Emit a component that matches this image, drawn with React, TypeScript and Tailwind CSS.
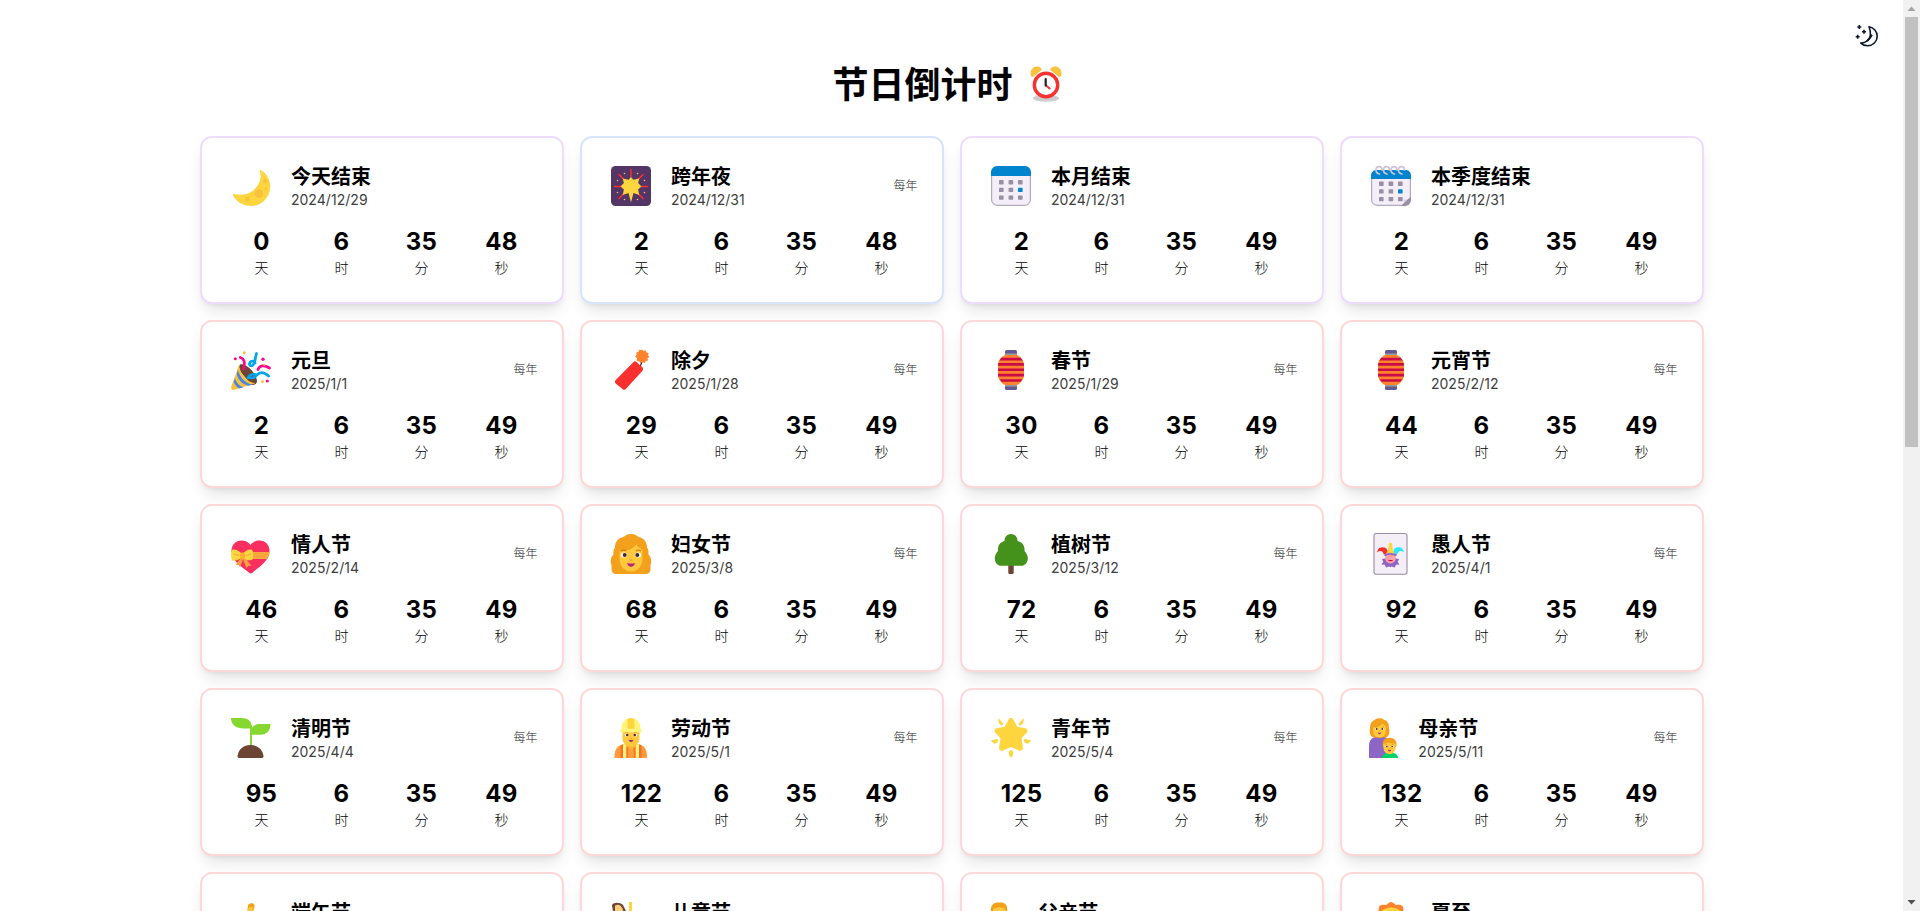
import type { ReactNode } from 'react';
import clsx from 'clsx';

type Tone = 'purple' | 'blue' | 'red';

interface Festival {
  name: string;
  date: string;
  days: number;
  seconds: number;
  tone: Tone;
  yearly: boolean;
  icon: ReactNode;
  narrow?: boolean;
}

const toneBorder: Record<Tone, string> = {
  purple: 'border-[#eedcfd]',
  blue: 'border-[#d6e4fd]',
  red: 'border-[#fdd8d8]',
};

const Moon = () => (
  <>
    <path fill="#fcd53f" d="M30.3 4.2C36 8 39.2 14 39.2 20.5 39.2 31.5 30.5 40 20 40 12 40 5.300 35.800 2 29.300 1.600 28.300 2.300 27.600 3.300 27.900 18 32 33 19.500 28.900 5.200 28.600 4.200 29.500 3.700 30.300 4.200Z" />
    <g fill="#f9c23c">
      <circle cx="28" cy="27.700" r="4.200" />
      <circle cx="16.300" cy="33" r="2.300" />
      <circle cx="34.300" cy="15" r="2.100" />
      <circle cx="35" cy="22.700" r="1.400" />
    </g>
  </>
);

const Fireworks = () => (
  <>
    <rect width="40" height="40" rx="4.500" fill="#533566" />
    <g stroke="#f8312f" strokeWidth="1.500" strokeLinecap="round">
      <path d="M20 3.500v7M3.500 20.500h6M30.500 20.500h6M8 8.500l5 5M32 8.500l-5 5M8 32.500l5-5M32 32.500l-5-5" />
    </g>
    <g fill="#f3c07b">
      <circle cx="13.500" cy="7.500" r="0.800" /><circle cx="26.500" cy="7.500" r="0.800" />
      <circle cx="6.500" cy="14.500" r="0.800" /><circle cx="33.500" cy="14.500" r="0.800" />
      <circle cx="6.500" cy="26.500" r="0.800" /><circle cx="33.500" cy="26.500" r="0.800" />
      <circle cx="13.500" cy="33.500" r="0.800" /><circle cx="26.500" cy="33.500" r="0.800" />
    </g>
    <path fill="#fcd53f" d="M20 11l2.300 2.700 6-1.300-1.200 4.700 3.400 3.500-3.400 3 1.200 5.300-5.800-1.800L20 36.500l-2.500-9.400-5.800 1.800 1.200-5.300-3.400-3 3.400-3.500-1.200-4.700 6 1.300Z" />
  </>
);

const CalendarGrid = ({ y }: { y: number }) => (
  <g>
    {[0, 1, 2].map((r) =>
      [8, 17.600, 27].map((x, c) => (
        <rect key={`${r}-${c}`} x={x} y={y + r * 7.700} width="4.600" height="4.400" rx="0.700" fill={r === 1 && c === 2 ? '#0084ce' : '#998ea4'} />
      )),
    )}
  </g>
);

const Calendar = () => (
  <>
    <rect x="0.600" y="0.600" width="38.800" height="38.800" rx="6" fill="#f3eef8" stroke="#b4acbc" strokeWidth="1.200" />
    <path fill="#0084ce" d="M0 10V6.500C0 2.900 2.900 0 6.500 0h27C37.100 0 40 2.900 40 6.500V10Z" />
    <CalendarGrid y={14} />
  </>
);

const SpiralCalendar = () => (
  <>
    <path d="M0.600 12h38.800v20l-8 7.400H6.600a6 6 0 0 1-6-6Z" fill="#f3eef8" stroke="#b4acbc" strokeWidth="1.200" />
    <path fill="#0084ce" d="M0 13V9.500C0 6 2.500 4 6 4h28c3.500 0 6 2 6 5.500V13Z" />
    <CalendarGrid y={15.500} />
    <path d="M40 30.500L30 40c3-1 3-2.500 2.500-6.500 3.500.5 6-.5 7.500-3Z" fill="#d8cfe0" />
    <path d="M40 30.500V34a6 6 0 0 1-6 6h-4Z" fill="#998ea4" />
    <g fill="none" stroke="#cdc4d6" strokeWidth="1.700" strokeLinecap="round">
      {[5, 12.500, 20, 27.500].map((x) => (
        <path key={x} d={`M${x + 3.500} 8c-2.500-.5-3.500-2-3.500-4C${x}-.5 ${x + 6}-.5 ${x + 6} 4`} />
      ))}
    </g>
  </>
);

const Party = () => (
  <>
    <path fill="#6d4534" d="M9 14.500c6-2 16.500 9 17 16.500 0 3-3 4-5.500 4L7 19Z" />
    <path fill="#f9c23c" d="M8.300 14.200C8 22 15 32 24.500 33.300L3.500 39.800C1.200 40.300-.3 38.800.2 36.700Z" />
    <g fill="#4686ec">
      <path d="M7 19.500c1 7 8 14.500 14.500 15l-4 1.200C11 34.500 6 28.500 5.900 23.500Z" />
      <path d="M4 28c1.200 4.500 4.500 8.300 8.500 9.200l-4 1.200C5.500 37 3.500 34.500 2.800 31.500Z" />
    </g>
    <g fill="none" strokeWidth="2.700" strokeLinecap="round">
      <path stroke="#f70a8d" d="M9.300 7.500c3.700 1 5.200 4.500 3.200 11.500M27 19.500c1.500-4 6-5 11.500-1.500" />
      <path stroke="#00a6ed" d="M25.500 3.500c-1.500 4-1 9-3.500 11.500-2 2-4.500 0-3-2.500 1.500-2.300 4.500-1.500 5 .5M17 28c3-5 6-3.500 9-3.200 3.500-3.500 7-2.800 11.500 1.200M26 24.800c-2 3-4.500 3.500-6.500 3" />
    </g>
    <g fill="#f70a8d"><circle cx="4.300" cy="8.700" r="1.500" /><circle cx="32" cy="9.300" r="1.700" /><circle cx="36.300" cy="31" r="1.600" /></g>
    <g fill="#f9c23c"><circle cx="13.300" cy="2.800" r="1.500" /><circle cx="31.500" cy="31.500" r="1.500" /><circle cx="33.500" cy="15" r="1" /></g>
  </>
);

const Firecracker = () => (
  <>
    <path d="M28.500 16.500c2.500-2 2.700-5 2.800-9" fill="none" stroke="#321b41" strokeWidth="1.300" />
    <path fill="#f8312f" d="M22.300 12.300c1.200-1.300 2.200-1.200 3.500-.1l5.300 4.900c1.300 1.200 1.400 2.500.2 3.800L14.800 39c-1.200 1.200-2.200 1.100-3.300 0L4.700 33.500c-1.100-1-1.100-2.200 0-3.400Z" />
    <path fill="#ff822d" d="M31.300 0l1.700 1.700 2.300-.7.600 2.300 2.300.6-.7 2.300L39 7.500l-2 1.600.6 2.300-2.400.5-1 2-2.400-.9-2 1-1.200-2-2.400-.5.400-2.400-2-1.700 1.600-1.700-.6-2.300 2.400-.6.700-2.300 2.400.5Z" transform="translate(-.5 -.8)" />
  </>
);

const Lantern = () => (
  <>
    <rect x="14" y="0" width="12" height="40" rx="1.600" fill="#635994" />
    <path fill="#9b9b9b" d="M14 3.500h12V5H14zM14 35h12v1.500H14z" />
    <path fill="#ff822d" d="M14 5h12c4 2 7 6 7 10v10c0 4-3 8-7 10H14c-4-2-7-6-7-10V15c0-4 3-8 7-10Z" />
    <g fill="#ca0b4a">
      <path d="M10.300 7.800h19.400l1.900 2.600H8.400zM7.300 13.100h25.400l.3 2.600H7zM7 18.500h26v2.600H7zM7 23.800h26l-.2 2.600H7.200zM8.800 29.200h22.400l-1.800 2.600H10.600z" />
    </g>
  </>
);

const GiftHeart = () => (
  <>
    <path fill="#f92f60" d="M19.500 11C22 7.500 25 6.500 28.500 6.500 34.500 6.500 38.500 11 38.500 17 38.500 27 28 33 21.300 38.700c-1 .9-2.200.9-3.200 0C11 33 .5 27 .5 17 .5 11 4.500 6.500 10.500 6.500 14 6.500 17 7.500 19.500 11Z" />
    <path fill="#f9aa3c" d="M15 18h23.500c-.1 2.700-.9 5-2.200 7H15Z" />
    <path d="M15 20.300h23M15 22.800h22" stroke="#ff9b3d" strokeWidth=".7" />
    <path fill="#f9a13c" d="M10.500 23L4.500 31l3-.3 1.500 2.500 3-8 3.500 9 1.700-2.500 3.300.3-7-9Z" />
    <path fill="#fcd53f" d="M11.500 20.500C8 16 4.500 15 1.500 15.500-.3 17-.3 25 1.500 26.800 5 27 8.500 26 11.500 22.500 14 26 17.500 27 21 26c1.700-2 1.700-8 0-10.300-3.500-.5-7 .8-9.500 4.800Z" />
    <path d="M3 20l5 1.500M20 20l-5 1.500" stroke="#f9a13c" strokeWidth="1" />
    <rect x="9" y="18.500" width="5" height="6" rx="1.500" fill="#ffb02e" />
  </>
);

const Face = ({ x, y, s = 1 }: { x: number; y: number; s?: number }) => (
  <g transform={`translate(${x} ${y}) scale(${s})`}>
    <ellipse cx="-7" cy="0" rx="3" ry="2.500" fill="#fff" />
    <ellipse cx="7" cy="0" rx="3" ry="2.500" fill="#fff" />
    <circle cx="-6.300" cy="0" r="2" fill="#402a32" />
    <circle cx="6.300" cy="0" r="2" fill="#402a32" />
    <path d="M-10-4q3-2 5 0M10-4q-3-2-5 0" fill="none" stroke="#c87b13" strokeWidth="1.200" />
    <path d="M-1.500 5h3" stroke="#f59f24" strokeWidth="1.400" />
    <path d="M-4 8q4 1 8 0-1 3.700-4 3.700T-4 8Z" fill="#bb1d80" />
  </g>
);

const Woman = () => (
  <>
    <path fill="#f3a01c" d="M20 0c4 0 6 1.500 7.500 3C33 4 36 8 36 13.500 38 16 37.500 19 37.500 20.500 41 24 40.500 28.500 39.500 31v4.500c0 2.500-2 4.500-4.500 4.500H5C2.500 40 .5 38 .5 35.500V31C-.5 28.500-1 24 2.500 20.500 2.500 19 2 16 4 13.500 4 8 7 4 12.500 3 14 1.500 16 0 20 0Z" />
    <path fill="#ffc83d" d="M25.500 10c1 3.500 4.500 4.500 6 6V24c0 8-4.500 13.500-11.500 13.500S8.500 32 8.500 24v-6.500C15.500 17 22.500 15 25.500 10Z" />
    <Face x={20} y={21} />
  </>
);

const Tree = () => (
  <>
    <path fill="#6d4534" d="M17.300 29h5.400v9.500c0 1-.6 1.500-1.500 1.500h-2.400c-.9 0-1.500-.5-1.500-1.500Z" />
    <path fill="#44911b" d="M20 0c4 0 6.500 3 6.500 7 5 1 7.500 5 7 10 2.500 3 3.700 5.500 3.200 8.500-.6 4-3.200 6.300-7 6.300H10.700c-3.800 0-6.200-2.300-6.800-6.300-.5-3 .7-5.500 3.100-8.500-.5-5 2-9 6.500-10 0-4 2.500-7 6.500-7Z" />
  </>
);

const Joker = () => (
  <>
    <rect x="3" y="-.5" width="33" height="40.800" rx="2.200" fill="#f3eef8" stroke="#998ea4" strokeWidth="1.100" />
    <path fill="#8d65c5" d="M11 25l3-.5h11l3 .5-1.300 3 1.800 2.500-3.500.3-1.200 2.700-3.300-1-1 .8-1.300-.8-3.200 1-1.200-2.700-3.500-.3 2-2.500Z" />
    <path fill="#f8312f" d="M6.300 18.500C6 14 11 11.500 15.500 14.500L18 20.500h-5.300C12 17 9.500 15.800 6.300 18.500Z" />
    <path fill="#26eafc" d="M32.700 18.500c.3-4.500-4.700-7-9.200-4L21 20.500h5.300c.7-3.500 3.200-4.700 6.400-2Z" />
    <path fill="#fcd53f" d="M14.500 20.500c2.500-3 3.300-6.500 3.300-10.500 0-1.700 3.400-1.700 3.400 0 0 4 .8 7.500 3.300 10.500Z" />
    <circle cx="19.500" cy="24" r="5.400" fill="#ff9fa5" />
    <path d="M13.500 21.500c3-2.300 9-2.300 12 0" fill="none" stroke="#8d65c5" strokeWidth="1.700" />
    <path d="M16.800 26h5.400q-2.700 2.500-5.400 0Z" fill="#ca0b4a" />
  </>
);

const Seedling = () => (
  <>
    <path fill="#86d72f" d="M0 0h11c6.500 0 10 4 10 9.500 3-3 5-3.500 8-3.500h10.500c0 6.500-3.500 10.700-10 10.700H21V28h-2V10.500h-6C5 10.500 0 6.500 0 0Z" />
    <path fill="#6d4534" d="M6.500 38.500C7 31.500 12.500 27 19.500 27S32 31.500 32.500 38.500c0 1-.6 1.400-1.500 1.400H8c-.9 0-1.500-.4-1.500-1.400Z" />
  </>
);

const Worker = () => (
  <>
    <path fill="#ff9b3d" d="M3.500 38c0-6.500 3.500-11.500 10-12h13c6.500.5 9.500 5.500 9.500 12v2H3.500Z" />
    <path fill="#fff478" d="M12 26.300h3.500V40H12zM24.500 26.300H28V40h-3.500z" />
    <path fill="#f96e2a" d="M9.500 27.500l2.500-1V40H9.500zM28 26.500l2.500 1V40H28zM15.500 29h9v11h-9z" />
    <path fill="#ff9b3d" d="M17 31h6v9h-6z" />
    <path fill="#ffb02e" d="M15 24h10v4l-5 5-5-5Z" />
    <path fill="#ffc83d" d="M11.500 12h17v8c0 5-3.500 8.500-8.500 8.500S11.500 25 11.500 20Z" />
    <Face x={20} y={17} s={0.600} />
    <path fill="#fff478" d="M10.500 11C10.500 4.500 14 0 20 0s9.500 4.500 9.500 11c1.700.3 1.700 3.300 0 3.300h-19c-1.700 0-1.700-3 0-3.300Z" />
    <path fill="#fcd53f" d="M16.500 2c0-2.500 7-2.500 7 0v8.800h-7Z" />
  </>
);

const GlowStar = () => (
  <>
    <path fill="#fcd53f" d="M17.700 1.500c.9-1.900 3.700-1.900 4.600 0l3.400 6.300c.4.800 1 1.200 1.800 1.300l6.800 1.100c2.200.3 3 2.800 1.500 4.400l-4.600 5c-.5.600-.7 1.200-.6 2l1.300 8c.4 2.300-2 3.900-4 2.900l-6.700-3c-.8-.4-1.600-.4-2.400 0l-6.700 3c-2 1-4.400-.6-4-2.900l1.300-8c.1-.8-.1-1.400-.6-2l-4.600-5c-1.500-1.600-.7-4.100 1.500-4.400l6.800-1.100c.8-.1 1.400-.5 1.800-1.300Z" />
    <g fill="#fcd53f">
      <path d="M7.500.2l4.800 5.500c.2 1.200-1 2-2 1.600C8 6.500 7 4 7.500.2ZM32.500.2l-4.800 5.500c-.2 1.200 1 2 2 1.600C32 6.500 33 4 32.500.2ZM0 22.500l5.800-1.500c1.400.2 1.700 1.700.9 2.500C5 26.500 2.500 26.500 0 22.500ZM40 22.500l-5.800-1.500c-1.400.2-1.700 1.700-.9 2.500C35 26.500 37.500 26.500 40 22.500ZM20 40c-2-2.500-2.700-4.500-2-6.500.6-1.700 3.400-1.700 4 0 .7 2 0 4-2 6.500Z" />
    </g>
  </>
);

const MotherAndSon = () => (
  <>
    <path fill="#8d65c5" d="M0 40V28c0-6 3.500-9.500 9-9.500h4.500c4 0 6.500 3 6.500 8V40Z" />
    <path fill="#f3a01c" d="M10.500.3c2 0 3.500.6 4.500 1.500 4 1 5 4.500 5 8.200 1 3 .5 9-3.500 9.500H5C.5 19 .3 13 1 10 1 6 2.500 3 6 1.800 7 .8 8.500.3 10.500.3Z" />
    <path fill="#ffc83d" d="M13.500 5.500c1 1.500 3 2 3.300 3V13c0 4-2.500 6.500-6.300 6.500S4.300 17 4.300 13V9c4 0 8-1 9.200-3.500Z" />
    <Face x={10.500} y={11} s={0.450} />
    <path fill="#00d26a" d="M13 40c0-3 2.500-5 6-5h4c3.500 0 6 2 6 5Z" />
    <path fill="#f3a01c" d="M14 29c-.7-4 0-8 3.500-8.500 3-1.200 7-.8 8.500 1.500 2 1.500 1.800 5 1 7.500Z" />
    <path fill="#ffc83d" d="M14.500 26c2-.3 3-.7 4.500-1.700 2 1.200 5 1.200 7.500 1.200v4c0 4-2.500 6.500-6 6.500s-6-2.500-6-6.500Z" />
    <Face x={20.500} y={28.500} s={0.420} />
  </>
);

const Rower = () => (
  <>
    <path fill="#f3a01c" d="M17 3.500C17.500 1.500 20 .8 22 1.500c2 .7 2 3.500.8 5.500l-2 7h-5Z" />
    <path fill="#ffc83d" d="M18 5h4l-2 9h-5Z" />
    <path fill="#8d65c5" d="M12 14h12l5 12H10Z" />
    <path fill="#00a6ed" d="M0 27h40c-2 7-8 11-20 11S2 34 0 27Z" />
  </>
);

const CarouselHorse = () => (
  <>
    <path fill="#fcd53f" d="M18 0h3v40h-3z" />
    <path fill="#6d4534" d="M1 3C3-.2 9 0 12 3l4 8v5H3Z" />
    <path fill="#ffce7c" d="M4 3.500c3-1.700 6-.7 7.500 3L14 16h18c3 6 2 12-1 16H10L4 12Z" />
  </>
);

const FatherAndSon = () => (
  <>
    <path fill="#f3a01c" d="M2 10C1 4 4 .5 9 .5h3c4.500 0 7 3.500 6 9.500Z" />
    <path fill="#ffc83d" d="M4 6.500c3 .5 4-1.500 6-1.500s3 2 6 1.500V12c0 9-12 9-12 0Z" />
    <path fill="#00a6ed" d="M0 40V28c0-6 3.500-9.500 9-9.500h4.500c4 0 6.500 3 6.500 8V40Z" />
  </>
);

const SunFace = () => (
  <>
    <path fill="#ff822d" d="M20 0c2.500 0 3.500 2.500 5 3 2-.5 5-.8 6.500 1.300 1.500 2 .5 4 1 5.200 1.500 1.500 4 1.500 5 4.200.7 2.300-1.500 4-1.500 6.300s2.200 4 1.500 6.300c-1 2.700-3.500 2.700-5 4.200-.5 1.200.5 3.200-1 5.200-1.500 2-4.500 1.300-6.500 1.300-1.500.5-2.500 3-5 3s-3.500-2.500-5-3c-2 0-5 .7-6.500-1.300-1.500-2-.5-4-1-5.200C6 29 3.500 29 2.500 26.300 1.800 24 4 22.300 4 20s-2.200-4-1.500-6.300c1-2.700 3.500-2.700 5-4.200.5-1.200-.5-3.200 1-5.200C10 2.200 13 2.500 15 3c1.500-.5 2.500-3 5-3Z" />
    <circle cx="20" cy="20" r="14.500" fill="#fcd53f" />
  </>
);

const AlarmClock = () => (
  <svg className="ml-[8.700px] mr-[8.700px] h-9 w-8" viewBox="0 0 32 36" aria-hidden="true">
    <ellipse cx="16" cy="32.300" rx="13" ry="3.500" fill="#cdcdcd" />
    <g fill="#f9c23c">
      <path d="M1 10C-.5 6 1.500 2 5 .8c3-1 6 .2 7 3L3.500 10.500C2.500 11.300 1.500 11 1 10ZM31 10c1.500-4-.5-8-4-9.200-3-1-6 .2-7 3l8.500 6.700c1 .8 2 .5 2.500-.5Z" />
    </g>
    <circle cx="16" cy="19" r="11.700" fill="#fff" stroke="#f8312f" strokeWidth="3.400" />
    <path d="M16 19.500l3.700 3" stroke="#f8312f" strokeWidth="2" strokeLinecap="round" />
    <path d="M15.700 13v6.500" stroke="#212121" strokeWidth="2.200" strokeLinecap="round" />
  </svg>
);

const NightIcon = () => (
  <svg className="size-6" viewBox="0 0 24 24" fill="none" stroke="currentColor" aria-hidden="true">
    <path strokeWidth="1.600" strokeLinejoin="round" d="M14 2.800c4.700.8 8.200 4.800 8.200 9.500 0 5.300-4.300 9.500-9.600 9.500-2.600 0-5-1-6.800-2.700 5.300-.5 9-3.500 9.600-7.600.4-3-.3-6-1.400-8.700Z" />
    <path fill="currentColor" stroke="none" d="M15.300 9.500l2.500 2-1.800 2.500-3 3.500-2-.7 3.500-4Z" />
    <path strokeWidth="1.600" d="M4.300 1v4M2.300 3h4M9 5.800v4M7 7.800h4M2.700 10.700v4M.7 12.700h4" />
  </svg>
);

const festivals: Festival[] = [
  { name: '今天结束', date: '2024/12/29', days: 0, seconds: 48, tone: 'purple', yearly: false, icon: <Moon /> },
  { name: '跨年夜', date: '2024/12/31', days: 2, seconds: 48, tone: 'blue', yearly: true, icon: <Fireworks /> },
  { name: '本月结束', date: '2024/12/31', days: 2, seconds: 49, tone: 'purple', yearly: false, icon: <Calendar /> },
  { name: '本季度结束', date: '2024/12/31', days: 2, seconds: 49, tone: 'purple', yearly: false, icon: <SpiralCalendar /> },
  { name: '元旦', date: '2025/1/1', days: 2, seconds: 49, tone: 'red', yearly: true, icon: <Party /> },
  { name: '除夕', date: '2025/1/28', days: 29, seconds: 49, tone: 'red', yearly: true, icon: <Firecracker /> },
  { name: '春节', date: '2025/1/29', days: 30, seconds: 49, tone: 'red', yearly: true, icon: <Lantern /> },
  { name: '元宵节', date: '2025/2/12', days: 44, seconds: 49, tone: 'red', yearly: true, icon: <Lantern /> },
  { name: '情人节', date: '2025/2/14', days: 46, seconds: 49, tone: 'red', yearly: true, icon: <GiftHeart /> },
  { name: '妇女节', date: '2025/3/8', days: 68, seconds: 49, tone: 'red', yearly: true, icon: <Woman /> },
  { name: '植树节', date: '2025/3/12', days: 72, seconds: 49, tone: 'red', yearly: true, icon: <Tree /> },
  { name: '愚人节', date: '2025/4/1', days: 92, seconds: 49, tone: 'red', yearly: true, icon: <Joker /> },
  { name: '清明节', date: '2025/4/4', days: 95, seconds: 49, tone: 'red', yearly: true, icon: <Seedling /> },
  { name: '劳动节', date: '2025/5/1', days: 122, seconds: 49, tone: 'red', yearly: true, icon: <Worker /> },
  { name: '青年节', date: '2025/5/4', days: 125, seconds: 49, tone: 'red', yearly: true, icon: <GlowStar /> },
  { name: '母亲节', date: '2025/5/11', days: 132, seconds: 49, tone: 'red', yearly: true, icon: <MotherAndSon />, narrow: true },
  { name: '端午节', date: '2025/5/31', days: 152, seconds: 49, tone: 'red', yearly: true, icon: <Rower /> },
  { name: '儿童节', date: '2025/6/1', days: 153, seconds: 49, tone: 'red', yearly: true, icon: <CarouselHorse /> },
  { name: '父亲节', date: '2025/6/15', days: 167, seconds: 49, tone: 'red', yearly: true, icon: <FatherAndSon />, narrow: true },
  { name: '夏至', date: '2025/6/21', days: 173, seconds: 49, tone: 'red', yearly: true, icon: <SunFace /> },
];

const Unit = ({ value, label }: { value: number; label: string }) => (
  <div className="flex flex-col items-center">
    <span className="text-2xl font-bold tracking-[0.3px]">{value}</span>
    <span className="text-sm font-light text-black">{label}</span>
  </div>
);

const FestivalCard = ({ item }: { item: Festival }) => (
  <article className={clsx('h-[168px] rounded-xl border-2 bg-white p-6 shadow-lg', toneBorder[item.tone])}>
    <div className="mb-4 flex items-center justify-between">
      <div className="flex items-center gap-4">
        <div className={clsx('flex h-10 shrink-0', item.narrow ? 'w-[36.800px] pl-[3.500px]' : 'w-[49.400px] pl-[5.500px]')}>
          <svg className="h-10 w-10 shrink-0 overflow-visible" viewBox="0 0 40 40" aria-hidden="true">
            {item.icon}
          </svg>
        </div>
        <div>
          <h2 className="pt-0.5 text-xl/[26px] font-bold">{item.name}</h2>
          <p className="text-sm tracking-[0.05px] text-[#3d3d3d]">{item.date}</p>
        </div>
      </div>
      {item.yearly && <span className="text-xs font-light text-[#222]">每年</span>}
    </div>
    <div className="grid grid-cols-4 gap-2">
      <Unit value={item.days} label="天" />
      <Unit value={6} label="时" />
      <Unit value={35} label="分" />
      <Unit value={item.seconds} label="秒" />
    </div>
  </article>
);

const Scrollbar = () => (
  <div className="flex w-[17px] shrink-0 flex-col items-center bg-[#f1f1f1]">
    <svg className="h-[17px] w-[17px] shrink-0" viewBox="0 0 17 17" fill="#a3a3a3" aria-hidden="true">
      <path d="M8.500 6.500L12.500 11h-8Z" />
    </svg>
    <div className="h-[430px] w-[13px] bg-[#c1c1c1]" />
    <svg className="mt-auto h-[17px] w-[17px] shrink-0" viewBox="0 0 17 17" fill="#505050" aria-hidden="true">
      <path d="M8.500 10.500L4.500 6h8Z" />
    </svg>
  </div>
);

export default function App() {
  return (
    <div className="flex h-[911px] overflow-hidden bg-white font-[Inter,'Noto_Sans_CJK_SC',sans-serif] text-black">
      <main className="relative min-w-0 flex-1 overflow-x-hidden overflow-y-auto [scrollbar-width:none]">
        <button type="button" aria-label="切换主题" className="absolute right-[24px] top-[24px] text-[#0f172a]">
          <NightIcon />
        </button>
        <div className="mx-auto w-[1504px] pt-16 pb-8">
          <h1 className="mb-8 flex h-10 items-center justify-center text-4xl font-bold">
            <span className="whitespace-pre pt-0.5">节日倒计时 </span>
            <AlarmClock />
          </h1>
          <div className="grid grid-cols-4 gap-4">
            {festivals.map((item) => (
              <FestivalCard key={item.name} item={item} />
            ))}
          </div>
        </div>
      </main>
      <Scrollbar />
    </div>
  );
}
